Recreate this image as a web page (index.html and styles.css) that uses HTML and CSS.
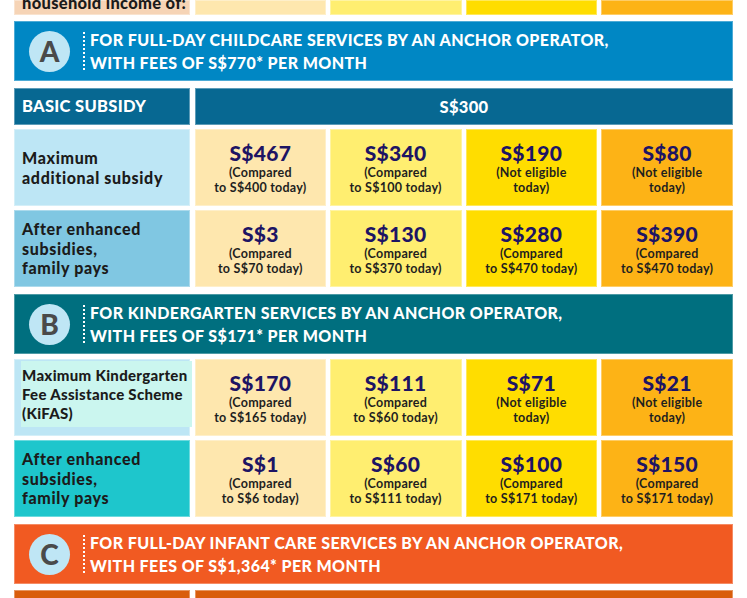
FILE: index.html
```html
<!DOCTYPE html>
<html lang="en">
<head>
<meta charset="utf-8">
<title>Enhanced subsidies</title>
<link rel="stylesheet" href="styles.css">
</head>
<body>
<div class="sheet">
  <div class="row top">
    <div class="label peachlabel"><span>household income of:</span></div>
    <div class="c1"></div>
    <div class="c2"></div>
    <div class="c3"></div>
    <div class="c4"></div>
  </div>

  <div class="hdr hdr-a blue">
    <div class="badge">A</div>
    <div class="dots"></div>
    <div class="hdr-text">FOR FULL-DAY CHILDCARE SERVICES BY AN ANCHOR OPERATOR,<br>WITH FEES OF S$770* PER MONTH</div>
  </div>

  <div class="row basic">
    <div class="label basic-label navy">BASIC SUBSIDY</div>
    <div class="span navy">S$300</div>
  </div>

  <div class="row">
    <div class="label sky">Maximum<br>additional subsidy</div>
    <div class="val c1"><b>S$467</b><small>(Compared<br>to S$400 today)</small></div>
    <div class="val c2"><b>S$340</b><small>(Compared<br>to S$100 today)</small></div>
    <div class="val c3"><b>S$190</b><small>(Not eligible<br>today)</small></div>
    <div class="val c4"><b>S$80</b><small>(Not eligible<br>today)</small></div>
  </div>

  <div class="row">
    <div class="label sky2">After enhanced<br>subsidies,<br>family pays</div>
    <div class="val c1"><b>S$3</b><small>(Compared<br>to S$70 today)</small></div>
    <div class="val c2"><b>S$130</b><small>(Compared<br>to S$370 today)</small></div>
    <div class="val c3"><b>S$280</b><small>(Compared<br>to S$470 today)</small></div>
    <div class="val c4"><b>S$390</b><small>(Compared<br>to S$470 today)</small></div>
  </div>

  <div class="hdr teal">
    <div class="badge">B</div>
    <div class="dots"></div>
    <div class="hdr-text">FOR KINDERGARTEN SERVICES BY AN ANCHOR OPERATOR,<br>WITH FEES OF S$171* PER MONTH</div>
  </div>

  <div class="row">
    <div class="label sky kifas"><div class="mint">Maximum Kindergarten<br>Fee Assistance Scheme<br>(KiFAS)</div></div>
    <div class="val c1"><b>S$170</b><small>(Compared<br>to S$165 today)</small></div>
    <div class="val c2"><b>S$111</b><small>(Compared<br>to S$60 today)</small></div>
    <div class="val c3"><b>S$71</b><small>(Not eligible<br>today)</small></div>
    <div class="val c4"><b>S$21</b><small>(Not eligible<br>today)</small></div>
  </div>

  <div class="row">
    <div class="label cyan">After enhanced<br>subsidies,<br>family pays</div>
    <div class="val c1"><b>S$1</b><small>(Compared<br>to S$6 today)</small></div>
    <div class="val c2"><b>S$60</b><small>(Compared<br>to S$111 today)</small></div>
    <div class="val c3"><b>S$100</b><small>(Compared<br>to S$171 today)</small></div>
    <div class="val c4"><b>S$150</b><small>(Compared<br>to S$171 today)</small></div>
  </div>

  <div class="hdr orange">
    <div class="badge">C</div>
    <div class="dots"></div>
    <div class="hdr-text">FOR FULL-DAY INFANT CARE SERVICES BY AN ANCHOR OPERATOR,<br>WITH FEES OF S$1,364* PER MONTH</div>
  </div>

  <div class="row basic">
    <div class="label basic-label rust"></div>
    <div class="span rust"></div>
  </div>
</div>
</body>
</html>
```

FILE: styles.css
```css
html, body {
  margin: 0;
  padding: 0;
  background: #ffffff;
}
body {
  width: 747px;
  height: 598px;
  overflow: hidden;
  font-family: Lato, "Noto Sans", "Liberation Sans", sans-serif;
}
.sheet {
  display: flex;
  flex-direction: column;
  gap: 4px;
  padding-left: 14px;
  width: 719px;
}
.row {
  display: grid;
  grid-template-columns: 176px repeat(4, 1fr);
  grid-template-rows: 77px;
  column-gap: 4px;
  height: 77px;
}
.row > div {
  box-shadow: inset 0 0 0 1px rgba(255, 255, 255, 0.35);
}
.row.top {
  height: 15px;
  grid-template-rows: 15px;
  overflow: hidden;
}
.row.basic {
  height: 37px;
  grid-template-rows: 37px;
  grid-template-columns: 176px 1fr;
  margin-top: 1px;
}
.label {
  display: flex;
  align-items: center;
  padding-left: 8px;
  font-size: 16px;
  font-weight: 900;
  line-height: 19.5px;
  letter-spacing: 0.65px;
  color: #1b1b1b;
  white-space: nowrap;
}
.peachlabel {
  background: #f6d4b6;
  align-items: flex-end;
  font-size: 16.5px;
  letter-spacing: 0.3px;
  padding-bottom: 4px;
  overflow: hidden;
  box-sizing: border-box;
  height: 15px;
}
.peachlabel span {
  line-height: 16px;
  flex-shrink: 0;
}
.basic-label {
  color: #ffffff;
  font-size: 16.5px;
  letter-spacing: 0.3px;
}
.span {
  display: flex;
  align-items: center;
  justify-content: center;
  color: #ffffff;
  font-weight: 900;
  font-size: 16.5px;
  letter-spacing: 0.3px;
  margin-left: 1px;
}
.navy { background: #076892; }
.rust { background: #d95d0c; }
.sky { background: #bde6f5; }
.sky2 { background: #80c7e2; }
.cyan { background: #1ec6cc; }
.c1 { background: #fee7ae; }
.c2 { background: #ffee70; }
.c3 { background: #ffdd00; }
.c4 { background: #fdb316; }
.row > .c1 { margin-left: 1px; }

.val {
  display: flex;
  flex-direction: column;
  align-items: center;
  justify-content: center;
  text-align: center;
  padding-top: 2px;
}
.val b {
  color: #1d1464;
  font-weight: 900;
  font-size: 21px;
  line-height: 22px;
  letter-spacing: 0.3px;
}
.val small {
  color: #1f1f1f;
  font-weight: 700;
  font-size: 12.5px;
  line-height: 15.5px;
  letter-spacing: 0.25px;
  margin-top: 1px;
}

.kifas {
  align-items: flex-start;
  padding-left: 7px;
}
.mint {
  background: #cbf6ef;
  margin-top: 2px;
  height: 66px;
  width: 171px;
  margin-right: -2px;
  padding-left: 1px;
  padding-top: 5px;
  box-sizing: border-box;
  font-size: 15px;
  line-height: 19px;
  letter-spacing: 0.3px;
  white-space: nowrap;
  position: relative;
  z-index: 1;
}

.hdr {
  display: flex;
  align-items: center;
  height: 60px;
  padding-left: 15px;
  margin: 3px 0 1px;
  box-shadow: inset 0 0 0 1px rgba(255, 255, 255, 0.3);
}
.hdr-a { margin: 2px 0 2px; }
.blue { background: #0087c4; }
.teal { background: #006f7f; }
.orange { background: #f15a22; }
.badge {
  width: 41px;
  height: 41px;
  border-radius: 50%;
  background: #bfe6f5;
  color: #4a4a4a;
  font-weight: 900;
  font-size: 28px;
  display: flex;
  align-items: center;
  justify-content: center;
  flex-shrink: 0;
}
.dots {
  width: 0;
  height: 38px;
  border-left: 2px dotted #ffffff;
  margin-left: 13px;
  margin-right: 5px;
}
.hdr-text {
  color: #ffffff;
  font-weight: 900;
  font-size: 16px;
  line-height: 23px;
  letter-spacing: 0.4px;
  white-space: nowrap;
}
```
